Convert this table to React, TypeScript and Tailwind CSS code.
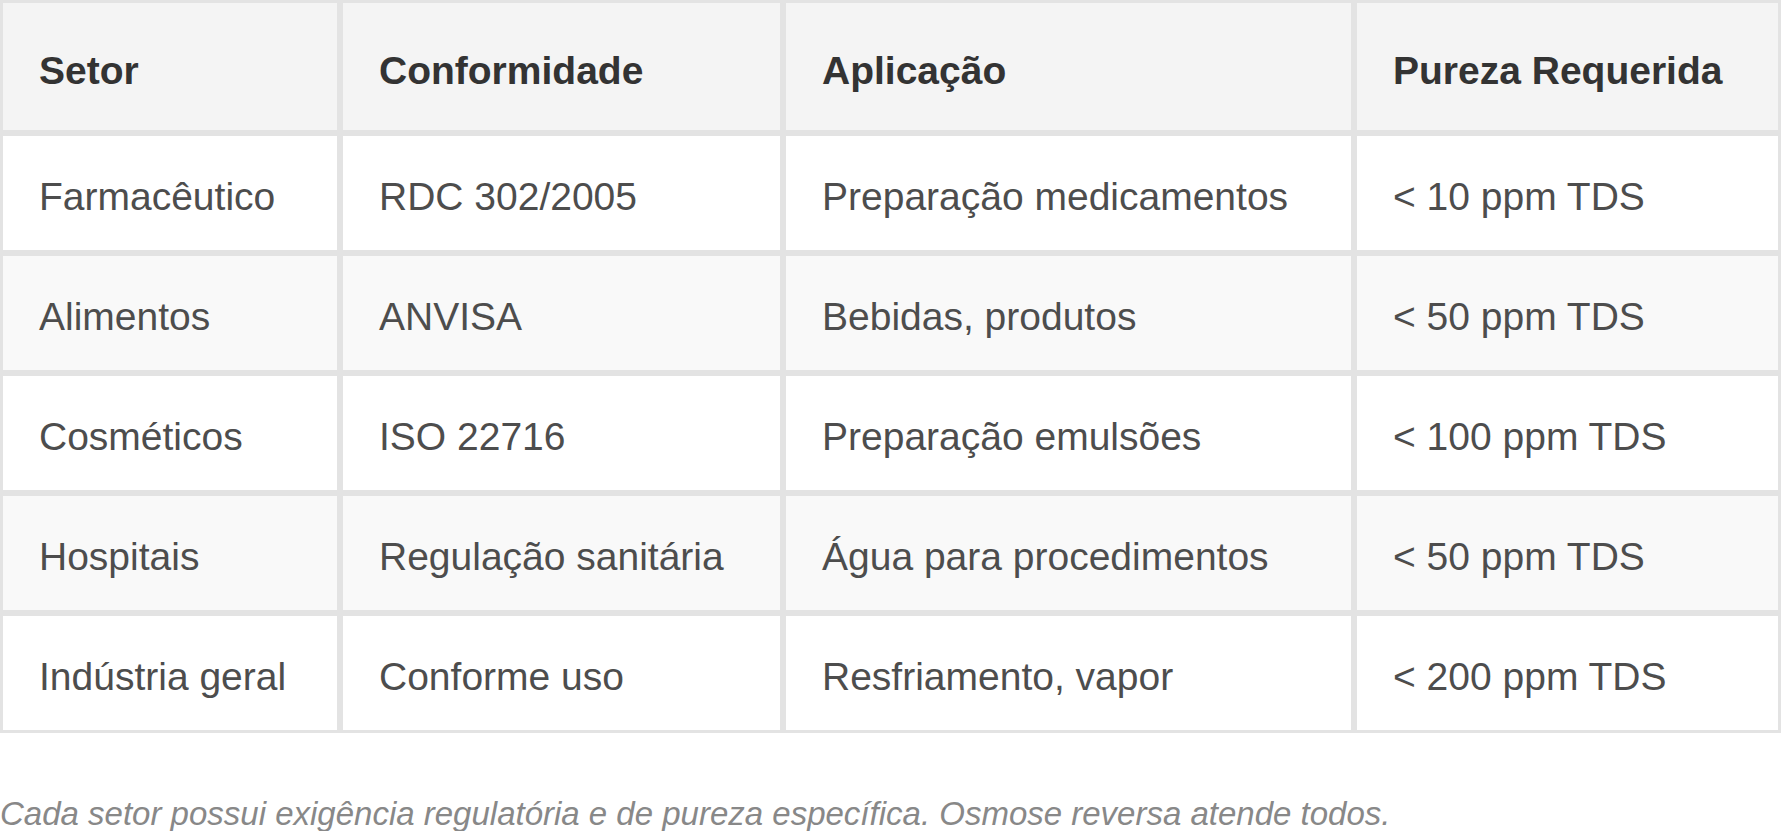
const rows = [
  ['Farmacêutico', 'RDC 302/2005', 'Preparação medicamentos', '< 10 ppm TDS'],
  ['Alimentos', 'ANVISA', 'Bebidas, produtos', '< 50 ppm TDS'],
  ['Cosméticos', 'ISO 22716', 'Preparação emulsões', '< 100 ppm TDS'],
  ['Hospitais', 'Regulação sanitária', 'Água para procedimentos', '< 50 ppm TDS'],
  ['Indústria geral', 'Conforme uso', 'Resfriamento, vapor', '< 200 ppm TDS'],
];

const headers = ['Setor', 'Conformidade', 'Aplicação', 'Pureza Requerida'];

export default function App() {
  return (
    <div className="w-[1782px] h-[831px] overflow-hidden bg-white font-['Liberation_Sans',Arial,sans-serif]">
      {/* Sector table */}
      <table className="w-[1781px] border-separate border-spacing-0 table-fixed text-[39px] leading-[44px]">
        <colgroup>
          <col className="w-[340px]" />
          <col className="w-[443px]" />
          <col className="w-[571px]" />
          <col />
        </colgroup>
        <thead>
          <tr className="bg-[#f4f4f4]">
            {headers.map((h) => (
              <th
                key={h}
                className="border-[3px] border-[#e3e3e3] pl-[36px] pr-[30px] pt-[46px] pb-[37px] text-left font-bold text-[#333333] whitespace-nowrap"
              >
                {h}
              </th>
            ))}
          </tr>
        </thead>
        <tbody>
          {rows.map((r, i) => (
            <tr key={r[0]} className={i % 2 === 1 ? 'bg-[#f9f9f9]' : 'bg-white'}>
              {r.map((c, j) => (
                <td
                  key={j}
                  className="border-[3px] border-[#e3e3e3] pl-[36px] pr-[30px] pt-[39px] pb-[31px] text-[#4d4d4d] whitespace-nowrap"
                >
                  {c}
                </td>
              ))}
            </tr>
          ))}
        </tbody>
      </table>

      <p className="mt-[62px] text-[33px] leading-[38px] italic text-[#888888] whitespace-nowrap">
        Cada setor possui exigência regulatória e de pureza específica. Osmose reversa atende todos.
      </p>
    </div>
  );
}
